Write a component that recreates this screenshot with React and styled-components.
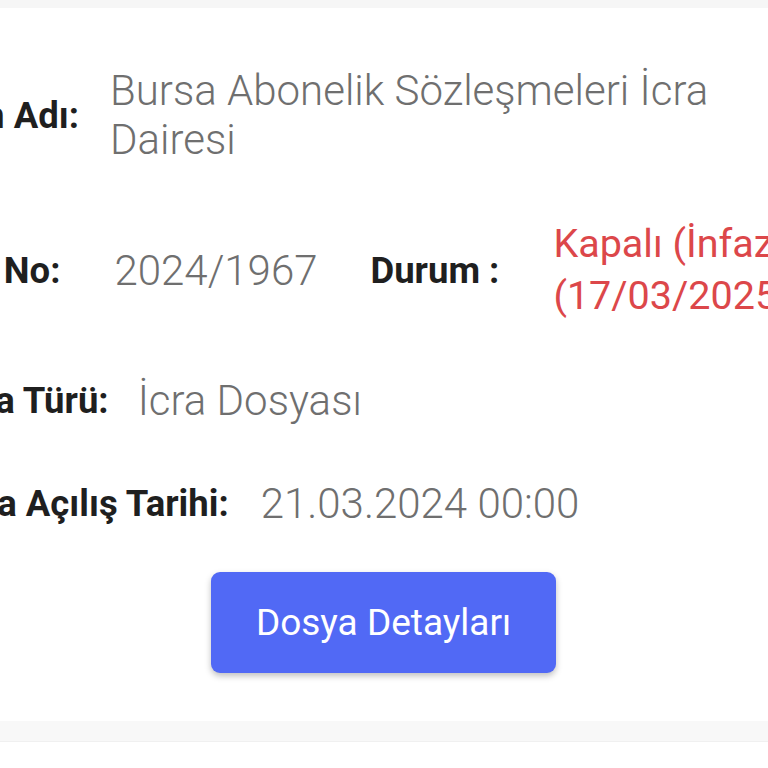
import React from 'react';
import styled, { createGlobalStyle } from 'styled-components';

const GlobalStyle = createGlobalStyle`
    html, body {
        margin: 0;
        padding: 0;
        background: #ffffff;
        overflow: hidden;
    }
    body {
        font-family: Roboto, "Liberation Sans", sans-serif;
    }
`;

const Screen = styled.div`
    width: 768px;
    height: 768px;
    overflow: hidden;
    background: #f6f6f6;
    padding-top: 8px;
    box-sizing: border-box;
    display: flex;
    flex-direction: column;
`;

const Card = styled.div`
    margin: 0 -130px;
    background: #ffffff;
    box-shadow: 0 2px 1px rgba(0, 0, 0, 0.2);
    padding: 58px 45px 48px 44px;
    display: flex;
    flex-direction: column;
`;

const Rows = styled.div`
    display: flex;
    flex-direction: column;
    gap: 54px;
`;

const Row = styled.div`
    display: flex;
    align-items: center;
    margin-left: ${p => p.$shift || 0}px;
`;

const Label = styled.span`
    font-size: 36.5px;
    line-height: 49px;
    font-weight: 700;
    color: #1f1f1f;
    white-space: nowrap;
    margin-right: ${p => p.$gap}px;
    flex-shrink: 0;
`;

const Value = styled.span`
    font-size: 42px;
    line-height: 49px;
    font-weight: 300;
    color: #6f6f6f;
    width: ${p => (p.$width ? `${p.$width}px` : 'auto')};
    flex-shrink: 0;
`;

const Status = styled.span`
    font-size: 39.5px;
    line-height: 52px;
    font-weight: 400;
    color: #dc474a;
    width: 300px;
`;

const Gap = styled.div`
    height: 20px;
    background: #f8f8f8;
    border-bottom: 1px solid #f0f0f0;
`;

const Next = styled.div`
    flex: 1;
    background: #ffffff;
`;

const DetailsButton = styled.button`
    align-self: center;
    margin-top: 44px;
    height: 101px;
    width: 345px;
    border: none;
    border-radius: 9px;
    background: #5169f5;
    color: #ffffff;
    font-family: Roboto, "Liberation Sans", sans-serif;
    font-size: 37px;
    font-weight: 400;
    box-shadow: 0 3px 6px rgba(0, 0, 0, 0.25);
    cursor: pointer;
`;

export default function App() {
    return (
        <>
            <GlobalStyle />
            <Screen>
                <Card>
                    <Rows>
                        <Row $shift={3}>
                            <Label $gap={31}>Birim Adı:</Label>
                            <Value $width={640}>Bursa Abonelik Sözleşmeleri İcra Dairesi</Value>
                        </Row>
                        <Row $shift={-20}>
                            <Label $gap={54}>Dosya No:</Label>
                            <Value $width={256}>2024/1967</Value>
                            <Label $gap={54}>Durum :</Label>
                            <Status>Kapalı (İnfaz) (17/03/2025)</Status>
                        </Row>
                        <Row>
                            <Label $gap={29}>Dosya Türü:</Label>
                            <Value>İcra Dosyası</Value>
                        </Row>
                        <Row $shift={2}>
                            <Label $gap={32}>Dosya Açılış Tarihi:</Label>
                            <Value>21.03.2024 00:00</Value>
                        </Row>
                    </Rows>
                    <DetailsButton>Dosya Detayları</DetailsButton>
                </Card>
                <Gap />
                <Next />
            </Screen>
        </>
    );
}
